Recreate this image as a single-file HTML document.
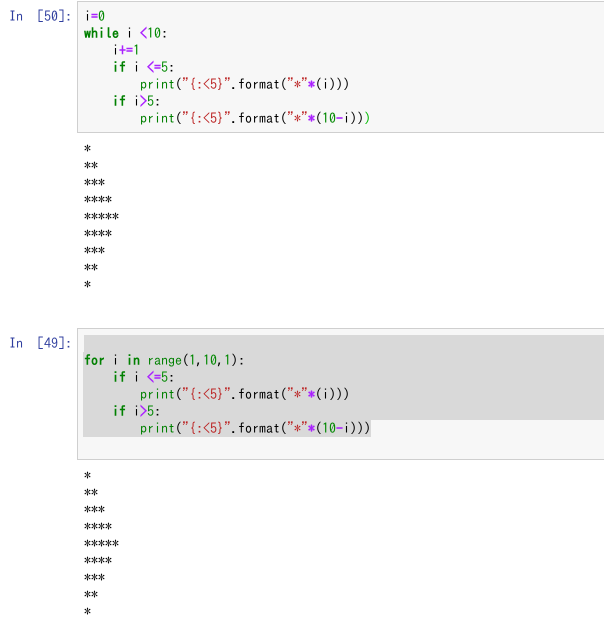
<!DOCTYPE html>
<html>
<head>
<meta charset="utf-8">
<style>
html,body{margin:0;padding:0;background:#fff;}
body{width:604px;height:625px;position:relative;overflow:hidden;font-family:"IPAGothic","Liberation Mono",monospace;font-size:14px;color:#000;}
.box{position:absolute;left:77px;width:527px;height:130px;background:#f7f7f7;border:1px solid #cfcfcf;border-right:none;box-sizing:content-box;}
.l{position:absolute;left:84px;height:17px;line-height:17px;white-space:pre;}
.p{position:absolute;left:9px;height:17px;line-height:17px;white-space:pre;color:#303f9f;}
.k{color:#008000;font-weight:bold}
.o{color:#aa22ff;font-weight:bold}
.n{color:#008800}
.s{color:#bb2222}
.b{color:#008000}
.m{color:#00bb00}
.sel{position:absolute;background:#d9d9d9;}
</style>
</head>
<body>
<div class="box" style="top:1px"></div>
<div class="box" style="top:328px"></div>

<div class="p" style="top:8px">In  [50]:</div>
<div class="l" style="top:8px">i<span class="o">=</span><span class="n">0</span></div>
<div class="l" style="top:25px"><span class="k">while</span> i <span class="o">&lt;</span><span class="n">10</span>:</div>
<div class="l" style="top:42px">    i<span class="o">+=</span><span class="n">1</span></div>
<div class="l" style="top:59px">    <span class="k">if</span> i <span class="o">&lt;=</span><span class="n">5</span>:</div>
<div class="l" style="top:76px">        <span class="b">print</span>(<span class="s">"{:&lt;5}"</span>.format(<span class="s">"*"</span><span class="o">*</span>(i)))</div>
<div class="l" style="top:93px">    <span class="k">if</span> i<span class="o">&gt;</span><span class="n">5</span>:</div>
<div class="l" style="top:110px">        <span class="b">print</span>(<span class="s">"{:&lt;5}"</span>.format(<span class="s">"*"</span><span class="o">*</span>(<span class="n">10</span><span class="o">-</span>i))<span class="m">)</span></div>

<div class="l" style="top:140px">*</div>
<div class="l" style="top:157px">**</div>
<div class="l" style="top:174px">***</div>
<div class="l" style="top:191px">****</div>
<div class="l" style="top:208px">*****</div>
<div class="l" style="top:225px">****</div>
<div class="l" style="top:242px">***</div>
<div class="l" style="top:259px">**</div>
<div class="l" style="top:276px">*</div>

<div class="sel" style="left:84px;top:335px;width:520px;height:17px"></div>
<div class="sel" style="left:83px;top:352px;width:521px;height:68px"></div>
<div class="sel" style="left:83px;top:420px;width:288px;height:17px"></div>

<div class="p" style="top:335px">In  [49]:</div>
<div class="l" style="top:352px"><span class="k">for</span> i <span class="k">in</span> <span class="b">range</span>(<span class="n">1</span>,<span class="n">10</span>,<span class="n">1</span>):</div>
<div class="l" style="top:369px">    <span class="k">if</span> i <span class="o">&lt;=</span><span class="n">5</span>:</div>
<div class="l" style="top:386px">        <span class="b">print</span>(<span class="s">"{:&lt;5}"</span>.format(<span class="s">"*"</span><span class="o">*</span>(i)))</div>
<div class="l" style="top:403px">    <span class="k">if</span> i<span class="o">&gt;</span><span class="n">5</span>:</div>
<div class="l" style="top:420px">        <span class="b">print</span>(<span class="s">"{:&lt;5}"</span>.format(<span class="s">"*"</span><span class="o">*</span>(<span class="n">10</span><span class="o">-</span>i)))</div>

<div class="l" style="top:467px">*</div>
<div class="l" style="top:484px">**</div>
<div class="l" style="top:501px">***</div>
<div class="l" style="top:518px">****</div>
<div class="l" style="top:535px">*****</div>
<div class="l" style="top:552px">****</div>
<div class="l" style="top:569px">***</div>
<div class="l" style="top:586px">**</div>
<div class="l" style="top:603px">*</div>
</body>
</html>
